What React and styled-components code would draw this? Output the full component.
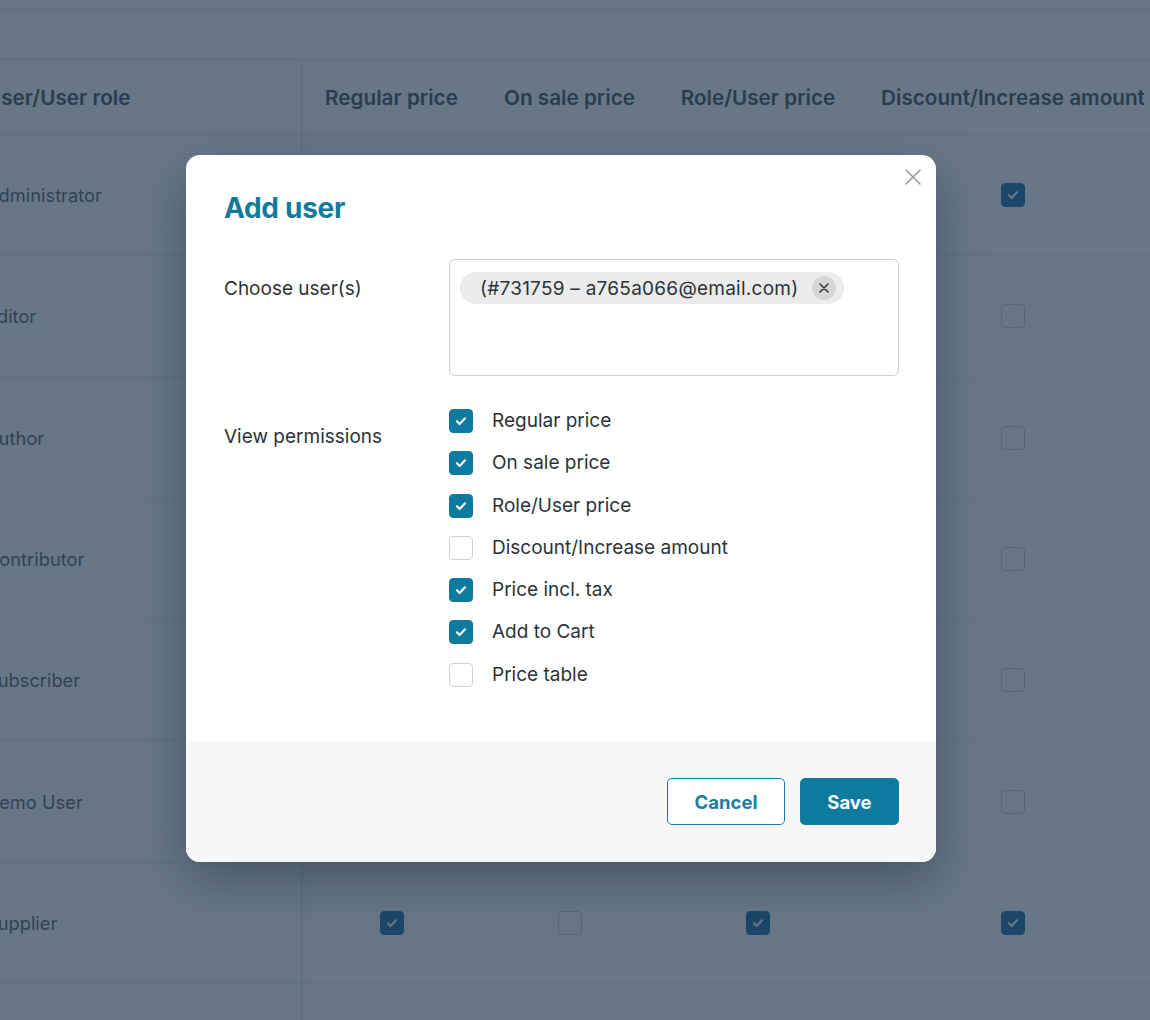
import React from "react";
import styled, { createGlobalStyle } from "styled-components";

const Global = createGlobalStyle`
  html, body { margin: 0; padding: 0; background: #ffffff; overflow: hidden; }
  body { font-family: Inter, "Noto Sans", "Liberation Sans", sans-serif; }
  * { box-sizing: border-box; }
`;

const Page = styled.div`
  width: 1150px;
  height: 1020px;
  overflow: hidden;
  position: relative;
  background: #ffffff;
`;

const TopBar = styled.div`
  height: 10px;
  border-bottom: 1px solid #e2e4e7;
  background: #fafafa;
`;

const SubBar = styled.div`
  height: 50px;
  border-bottom: 1px solid #e2e4e7;
`;

const Grid = styled.div`
  display: grid;
  grid-template-columns: 344px 179px 177px 200px 310px;
  margin-left: -42px;
`;

const HeadCell = styled.div`
  height: 75px;
  display: flex;
  align-items: center;
  justify-content: ${(p) => (p.$first ? "flex-start" : "center")};
  padding-left: ${(p) => (p.$first ? "28px" : "0")};
  font-size: 20.7px;
  font-weight: 600;
  color: #50575e;
  white-space: nowrap;
  border-bottom: 1px solid #e6e7e9;
  ${(p) => p.$first && "border-right: 1px solid #e2e4e7; box-shadow: 4px 0 8px rgba(0,0,0,0.04);"}
`;

const Cell = styled.div`
  height: 121.3px;
  display: flex;
  align-items: center;
  justify-content: ${(p) => (p.$first ? "flex-start" : "center")};
  padding-left: ${(p) => (p.$first ? "28px" : "0")};
  font-size: 18.3px;
  color: #646970;
  white-space: nowrap;
  border-bottom: 1px solid #eceef0;
  ${(p) => p.$first && "border-right: 1px solid #e2e4e7; box-shadow: 4px 0 8px rgba(0,0,0,0.04);"}
`;

const Box = styled.span`
  width: 24px;
  height: 24px;
  border-radius: 4px;
  display: inline-flex;
  align-items: center;
  justify-content: center;
  flex: none;
  background: ${(p) => (p.$on ? p.$fill || "#0e7aa0" : "#ffffff")};
  border: 1px solid ${(p) => (p.$on ? p.$fill || "#0e7aa0" : "#cfd1d4")};
`;

const Overlay = styled.div`
  position: absolute;
  inset: 0;
  background: rgba(22, 46, 70, 0.65);
`;

const Modal = styled.div`
  position: absolute;
  left: 186px;
  top: 155px;
  width: 750px;
  height: 707px;
  background: #ffffff;
  border-radius: 14px;
  overflow: hidden;
  box-shadow: 0 18px 50px rgba(10, 25, 40, 0.35);
  display: flex;
  flex-direction: column;
`;

const CloseBtn = styled.button`
  position: absolute;
  right: 13px;
  top: 12px;
  width: 20px;
  height: 20px;
  padding: 0;
  border: 0;
  background: transparent;
  display: flex;
  align-items: center;
  justify-content: center;
`;

const Body = styled.div`
  flex: 1;
  padding: 36px 37px 0 38px;
`;

const Title = styled.h2`
  margin: 0;
  font-size: 28px;
  line-height: 34px;
  font-weight: 700;
  color: #137a9c;
  letter-spacing: -0.3px;
`;

const FormRow = styled.div`
  display: grid;
  grid-template-columns: 225px 450px;
  margin-top: ${(p) => p.$mt}px;
`;

const Label = styled.div`
  font-size: 19px;
  line-height: 22px;
  color: #2c3338;
  padding-top: ${(p) => p.$pt}px;
`;

const TagInput = styled.div`
  height: 117px;
  border: 1px solid #cdd0d4;
  border-radius: 6px;
  padding: 12px 10px;
`;

const Chip = styled.span`
  display: inline-flex;
  align-items: center;
  height: 32px;
  border-radius: 16px;
  background: #ebebeb;
  padding: 0 8px 0 20px;
  gap: 14px;
  font-size: 19px;
  letter-spacing: 0.25px;
  color: #2c3338;
`;

const ChipRemove = styled.span`
  width: 24px;
  height: 24px;
  border-radius: 50%;
  background: #d6d6d6;
  display: inline-flex;
  align-items: center;
  justify-content: center;
`;

const CheckList = styled.div`
  display: flex;
  flex-direction: column;
  gap: 18.3px;
`;

const CheckItem = styled.label`
  display: flex;
  align-items: center;
  gap: 19px;
  font-size: 19px;
  line-height: 24px;
  color: #2c3338;
`;

const Footer = styled.div`
  height: 121px;
  background: #f6f7f7;
  display: flex;
  align-items: center;
  justify-content: flex-end;
  gap: 15px;
  padding-right: 37px;
`;

const Button = styled.button`
  height: 47px;
  width: ${(p) => p.$w}px;
  border-radius: 5px;
  font-family: inherit;
  font-size: 18.5px;
  font-weight: 700;
  cursor: pointer;
  border: 1px solid #137ea3;
  background: ${(p) => (p.$primary ? "#0e7aa0" : "#ffffff")};
  color: ${(p) => (p.$primary ? "#ffffff" : "#1a7fa3")};
`;

const Check = ({ size = 24 }) => (
  <svg width={size} height={size} viewBox="0 0 24 24" fill="none">
    <path d="M7.6 12.4l2.9 2.9 5.9-6.2" stroke="#ffffff" strokeWidth="2.3" strokeLinecap="round" strokeLinejoin="round" />
  </svg>
);

const CheckBox = ({ on, fill }) => (
  <Box $on={on} $fill={fill}>{on && <Check />}</Box>
);

const rows = [
  { name: "Administrator", v: [true, true, true, true] },
  { name: "Editor", v: [true, true, true, false] },
  { name: "Author", v: [true, true, true, false] },
  { name: "Contributor", v: [true, true, true, false] },
  { name: "Subscriber", v: [true, true, true, false] },
  { name: "Demo User", v: [true, true, true, false] },
  { name: "Supplier", v: [true, false, true, true] },
  { name: "Customer", v: [true, true, true, true] },
];

const headers = ["Regular price", "On sale price", "Role/User price", "Discount/Increase amount"];

const perms = [
  { label: "Regular price", on: true },
  { label: "On sale price", on: true },
  { label: "Role/User price", on: true },
  { label: "Discount/Increase amount", on: false },
  { label: "Price incl. tax", on: true },
  { label: "Add to Cart", on: true },
  { label: "Price table", on: false },
];

export default function App() {
  return (
    <Page>
      <Global />
      <TopBar />
      <SubBar />
      <Grid>
        <HeadCell $first>User/User role</HeadCell>
        {headers.map((h) => (
          <HeadCell key={h}>{h}</HeadCell>
        ))}
        {rows.map((r) => (
          <React.Fragment key={r.name}>
            <Cell $first>{r.name}</Cell>
            {r.v.map((on, i) => (
              <Cell key={i}>
                <CheckBox on={on} fill="#2a77a8" />
              </Cell>
            ))}
          </React.Fragment>
        ))}
      </Grid>
      <Overlay>
        <Modal>
          <CloseBtn aria-label="Close">
            <svg width="18" height="18" viewBox="0 0 18 18">
              <path d="M2 2l14 14M16 2L2 16" stroke="#9a9a9a" strokeWidth="1.6" strokeLinecap="round" />
            </svg>
          </CloseBtn>
          <Body>
            <Title>Add user</Title>
            <FormRow $mt={34}>
              <Label $pt={19}>Choose user(s)</Label>
              <TagInput>
                <Chip>
                  (#731759 – a765a066@email.com)
                  <ChipRemove>
                    <svg width="10" height="10" viewBox="0 0 10 10">
                      <path d="M1 1l8 8M9 1L1 9" stroke="#2c3338" strokeWidth="1.5" strokeLinecap="round" />
                    </svg>
                  </ChipRemove>
                </Chip>
              </TagInput>
            </FormRow>
            <FormRow $mt={33}>
              <Label $pt={17}>View permissions</Label>
              <CheckList>
                {perms.map((p) => (
                  <CheckItem key={p.label}>
                    <CheckBox on={p.on} />
                    {p.label}
                  </CheckItem>
                ))}
              </CheckList>
            </FormRow>
          </Body>
          <Footer>
            <Button $w={118}>Cancel</Button>
            <Button $w={99} $primary>Save</Button>
          </Footer>
        </Modal>
      </Overlay>
    </Page>
  );
}
